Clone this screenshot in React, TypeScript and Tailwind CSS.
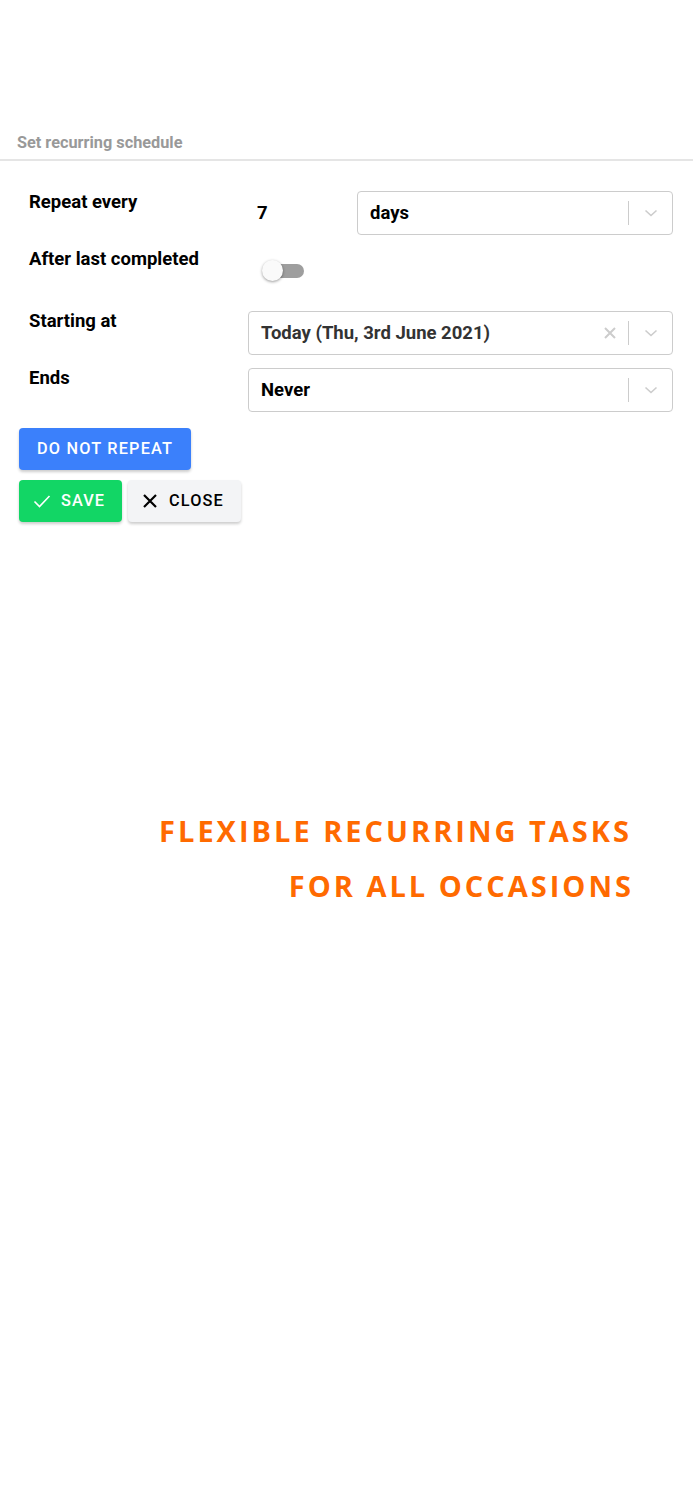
import React from "react";

const Chevron = () => (
  <svg width="20" height="20" viewBox="0 0 20 20" className="text-[#cccccc]">
    <path d="M4.5 7.5 L10 12.5 L15.5 7.5" fill="none" stroke="currentColor" strokeWidth="1.6" />
  </svg>
);

const Clear = () => (
  <svg width="20" height="20" viewBox="0 0 20 20" className="text-[#cccccc]">
    <path d="M5 5 L15 15 M15 5 L5 15" fill="none" stroke="currentColor" strokeWidth="2" />
  </svg>
);

function Select({ value, clear, dark }: { value: string; clear?: boolean; dark?: boolean }) {
  return (
    <div className="flex h-[44px] flex-1 items-center rounded-[4px] border border-[#cccccc] bg-white">
      <div className={`flex-1 pl-[12px] text-[18.5px] font-bold ${dark ? "text-[#333333]" : "text-black"}`}>{value}</div>
      {clear && (
        <div className="flex w-[36px] items-center justify-center">
          <Clear />
        </div>
      )}
      <div className="h-[24px] w-px bg-[#cccccc]" />
      <div className="flex w-[43px] items-center justify-center">
        <Chevron />
      </div>
    </div>
  );
}

export default function App() {
  return (
    <div className="min-h-[1500px] w-full bg-white" style={{ fontFamily: "Roboto, 'Liberation Sans', sans-serif" }}>
      <div className="h-[131px]" />
      <div className="border-b-2 border-[#e5e5e5] pb-[4px] pl-[17px] text-[16.3px] font-bold text-[#999999]">
        Set recurring schedule
      </div>
      <div className="px-[19px] pr-[20px] pt-[30px]">
        <div className="flex flex-col gap-[13px]">
          <div className="flex h-[44px]">
            <div className="w-[229px] pl-[10px] pt-[1px] text-[18.5px] font-bold leading-[21px] text-black">Repeat every</div>
            <div className="flex flex-1 items-center gap-[9px]">
              <div className="flex w-[100px] items-center pl-[9px] text-[18.5px] font-bold text-black">7</div>
              <Select value="days" />
            </div>
          </div>
          <div className="flex h-[50px]">
            <div className="w-[229px] pl-[10px] pt-[1px] text-[18.5px] font-bold leading-[21px] text-black">After last completed</div>
            <div className="relative flex-1">
              <div className="absolute left-[20px] top-[16px] h-[14px] w-[36px] rounded-full bg-[#9e9e9e]" />
              <div className="absolute left-[14px] top-[12px] h-[21px] w-[21px] rounded-full bg-[#fafafa] shadow-[0_1px_3px_rgba(0,0,0,0.4)]" />
            </div>
          </div>
          <div className="flex h-[44px]">
            <div className="w-[229px] pl-[10px] text-[18.5px] font-bold leading-[21px] text-black">Starting at</div>
            <Select value="Today (Thu, 3rd June 2021)" clear dark />
          </div>
          <div className="flex h-[44px]">
            <div className="w-[229px] pl-[10px] text-[18.5px] font-bold leading-[21px] text-black">Ends</div>
            <Select value="Never" />
          </div>
        </div>
        <div className="mt-[16px] flex flex-col items-start gap-[10px]">
          <button className="flex h-[42px] items-center rounded-[4px] bg-[#3b80fb] px-[18px] text-[16.3px] font-medium tracking-[1.2px] text-white shadow-[0_2px_3px_rgba(0,0,0,0.2)]">
            DO NOT REPEAT
          </button>
          <div className="flex gap-[6px]">
            <button className="flex h-[42px] items-center gap-[10px] rounded-[4px] bg-[#12d665] pl-[14px] pr-[17px] text-[16.3px] font-medium tracking-[1.1px] text-white shadow-[0_2px_3px_rgba(0,0,0,0.2)]">
              <svg width="18" height="18" viewBox="0 0 18 18">
                <path d="M1.5 9.5 L6.5 14.5 L16.5 4" fill="none" stroke="white" strokeWidth="1.6" />
              </svg>
              SAVE
            </button>
            <button className="flex h-[42px] items-center gap-[11px] rounded-[4px] bg-[#f3f4f6] pl-[14px] pr-[17px] text-[16.3px] font-medium tracking-[1.1px] text-black shadow-[0_2px_3px_rgba(0,0,0,0.2)]">
              <svg width="16" height="16" viewBox="0 0 16 16">
                <path d="M2 2 L14 14 M14 2 L2 14" fill="none" stroke="black" strokeWidth="2.2" />
              </svg>
              CLOSE
            </button>
          </div>
        </div>
      </div>
      <div
        className="mt-[281px] flex flex-col items-end pr-[61px] text-[29px] font-bold uppercase leading-[55px] tracking-[3px] text-[#ff6a00]"
        style={{ fontFamily: "'Open Sans', 'Noto Sans', sans-serif" }}
      >
        <div>Flexible recurring tasks</div>
        <div className="mr-[-2px]">For all occasions</div>
      </div>
    </div>
  );
}
